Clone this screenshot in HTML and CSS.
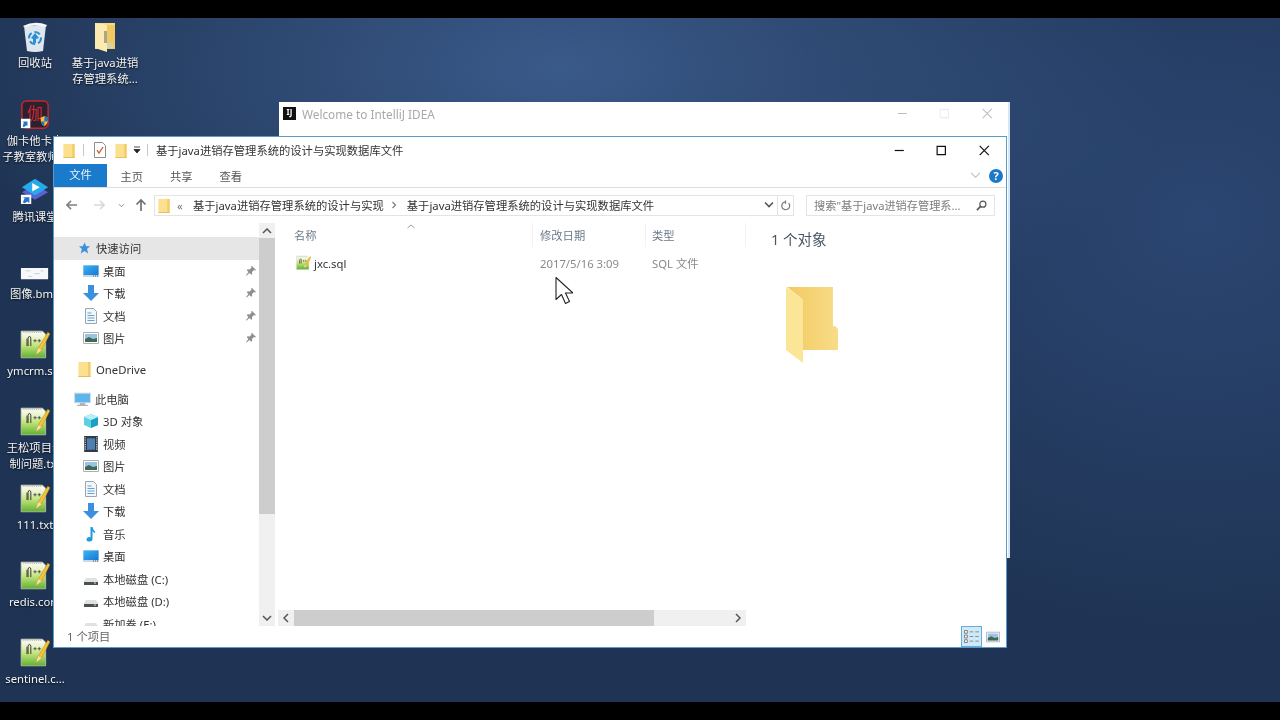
FILE: index.html
```html
<!DOCTYPE html>
<html lang="zh-CN">
<head>
<meta charset="utf-8">
<title>基于java进销存管理系统的设计与实现数据库文件</title>
<link rel="stylesheet" href="styles.css">
</head>
<body>
<svg class="defs" width="0" height="0" aria-hidden="true">
  <defs>
    <linearGradient id="gn" x1="0" x2="0" y1="0" y2="1"><stop offset="0" stop-color="#fbfbf4"/><stop offset=".22" stop-color="#eef4d4"/><stop offset=".55" stop-color="#bfe278"/><stop offset="1" stop-color="#5fb132"/></linearGradient>
    <linearGradient id="gd" x1="0" x2="1" y1="0" y2="1"><stop offset="0" stop-color="#3db3f5"/><stop offset="1" stop-color="#1478d4"/></linearGradient>
    <linearGradient id="gb" x1="0" x2="1" y1="0" y2="0"><stop offset="0" stop-color="#f1cb62"/><stop offset="1" stop-color="#f9dc88"/></linearGradient>
    <symbol id="i-folder" viewBox="0 0 12 16">
      <path d="M0 1h12v15H0z" fill="#fbe08f"/><path d="M9.500 1H12v15H9.500z" fill="#f3cc69"/><path d="M0 15h12v1H0z" fill="#e8bd55"/>
    </symbol>
    <symbol id="i-np" viewBox="0 0 28 30">
      <path d="M1 2h20l3 3v22H1z" fill="url(#gn)" stroke="#c6cdb4" stroke-width=".7"/>
      <path d="M3 3h17" stroke="#aaa" stroke-dasharray="1 1"/>
      <path d="M7.500 16V9q0-2 1.300-2t1.300 2v7M6.500 9v7" fill="none" stroke="#333" stroke-width=".9"/>
      <path d="M12.500 11h3M14 9.500v3M16.500 11h3M18 9.500v3" stroke="#444" stroke-width=".8"/>
      <path d="M15 24l2-6L26 3l2 1.500L20 20z" fill="#f3c33a" stroke="#b88a22" stroke-width=".5"/>
      <path d="M15 24l2-6 3 2z" fill="#f9e2b0"/>
    </symbol>
    <symbol id="i-desktop" viewBox="0 0 16 14">
      <path d="M0 1h16v12H0z" fill="#cfd8e0"/><path d="M.5 1.500h15v9.500H.5z" fill="url(#gd)"/><path d="M10 12h5" stroke="#456" stroke-dasharray="1 1"/>
    </symbol>
    <symbol id="i-down" viewBox="0 0 16 16">
      <path d="M5 0h6v8h5l-8 8-8-8h5z" fill="#3a90dc"/>
    </symbol>
    <symbol id="i-doc" viewBox="0 0 14 16">
      <path d="M1.500.5h8l3 3v12h-11z" fill="#f4f7fa" stroke="#9aa7b3"/>
      <path d="M3.500 5h4M3.500 7.500h7M3.500 10h7M3.500 12.500h7" stroke="#5ea4d6"/>
    </symbol>
    <symbol id="i-pic" viewBox="0 0 16 12">
      <path d="M.5.500h15v11H.5z" fill="#fff" stroke="#a9b0b6"/><path d="M2 2h12v8H2z" fill="#9cc3e4"/><path d="M2 7l4-2 4 2 4-1v4H2z" fill="#3f6a58"/>
    </symbol>
    <symbol id="i-pin" viewBox="0 0 10 10">
      <path d="M6 0l4 4-1 .6-1-.6-2 2 .2 2-1 .8-1.800-1.800L.8 9.600 0 9.200 2.400 6 .8 4.200l.8-1 2 .2 2-2-.6-1z" fill="#8f8f8f"/>
    </symbol>
    <symbol id="i-disk" viewBox="0 0 16 14">
      <path d="M1 9l2-3h10l2 3v4H1z" fill="#dfe2e4"/><path d="M1 10h14v3H1z" fill="#4d4f52"/><path d="M11 11h2" stroke="#cfe7a8"/>
    </symbol>
  </defs>
</svg>

<div class="screen">
  <div class="bar"></div>
  <main class="desktop">

    <div class="dicon at-recycle">
      <svg class="dsvg" viewBox="0 0 30 32"><path d="M4 5l22-1-3 26q-8 2-16 0z" fill="#dfe7ee"/><path d="M3 5q12-6 24-1l-1 2q-11-3-22 0z" fill="#f5f8fb"/><path d="M11 17l4-5 4 5-3 1v4h-3v-4z" fill="#2d8ed6"/><circle cx="15" cy="17" r="6" fill="none" stroke="#2d8ed6" stroke-width="2" stroke-dasharray="6 3"/></svg>
      <span class="dlabel">回收站</span>
    </div>
    <div class="dicon at-zip">
      <svg class="dsvg" viewBox="0 0 30 32"><path d="M5 2h20v26H5z" fill="#f8da84"/><path d="M5 2l12 2v27L5 27z" fill="#fcebb0"/><path d="M17 4h8v24h-8z" fill="#f1c964"/><path d="M14 10h3v12h-3z" fill="#a8a98a"/><path d="M17 22h6v5h-6z" fill="#d9d0ac"/></svg>
      <span class="dlabel">基于java进销<br>存管理系统...</span>
    </div>
    <div class="dicon at-jiaka">
      <svg class="dsvg" viewBox="0 0 32 32"><rect x="2" y="1" width="28" height="29" rx="5" fill="#2a2231" stroke="#c8262b" stroke-width="1.600"/><text x="16" y="20" class="jia">伽</text><path d="M22 19l4-2 4 2q0 7-4 9-4-2-4-9z" fill="#f4c430"/><path d="M26 17l4 2q0 3-.7 4H26zM22.700 23H26v5q-2.500-1-3.300-5z" fill="#2a6fc0"/><path d="M1 20h10v10H1z" fill="#fff"/><path d="M3 28l1-4-1-1h5v5l-1-1-3 2z" fill="#2474c8"/></svg>
      <span class="dlabel">伽卡他卡电<br>子教室教师...</span>
    </div>
    <div class="dicon at-ke">
      <svg class="dsvg" viewBox="0 0 32 32"><g transform="translate(0 2) scale(1 .9)"><path d="M16 8l14 9-14 9-14-9z" fill="#5a62d0"/><path d="M16 1l14 10-14 10L2 11z" fill="#27a9ee"/><path d="M13 6l8 5-8 5z" fill="#fff"/><path d="M1 20h11v11H1z" fill="#fff"/><path d="M3 29l2-5-2-1h7v7l-2-2-3 2z" fill="#2474c8"/></g></svg>
      <span class="dlabel">腾讯课堂</span>
    </div>
    <div class="dicon at-bmp">
      <svg class="dsvg" viewBox="0 0 32 32"><path d="M1 16h29v12H1z" fill="#f7f8fb"/><path d="M6 19h5M15 22h6M9 25h4M22 19h3" stroke="#c8cdda"/></svg>
      <span class="dlabel">图像.bmp</span>
    </div>
    <div class="dicon at-ym"><svg class="dsvg"><use href="#i-np"/></svg><span class="dlabel">ymcrm.sql</span></div>
    <div class="dicon at-ws"><svg class="dsvg"><use href="#i-np"/></svg><span class="dlabel">王松项目录<br>制问题.txt</span></div>
    <div class="dicon at-111"><svg class="dsvg"><use href="#i-np"/></svg><span class="dlabel">111.txt</span></div>
    <div class="dicon at-redis"><svg class="dsvg"><use href="#i-np"/></svg><span class="dlabel">redis.conf</span></div>
    <div class="dicon at-sent"><svg class="dsvg"><use href="#i-np"/></svg><span class="dlabel">sentinel.c...</span></div>

    <section class="idea">
      <div class="idea-title">
        <span class="ij"><span class="ij-t">IJ</span></span>
        <span class="idea-name">Welcome to IntelliJ IDEA</span>
        <div class="caps caps-faint">
          <svg class="cap" viewBox="0 0 12 12"><path d="M1 6h10"/></svg>
          <svg class="cap" viewBox="0 0 12 12"><path d="M1.500 1.500h9v9h-9z"/></svg>
          <svg class="cap" viewBox="0 0 12 12"><path d="M1 1l10 10M11 1L1 11"/></svg>
        </div>
      </div>
    </section>

    <section class="win">
      <header class="titlebar">
        <svg class="qa-f"><use href="#i-folder"/></svg>
        <i class="qa-sep"></i>
        <svg class="qa-n" viewBox="0 0 12 16"><path d="M.5.500h8l3 3v12H.5z" fill="#fff" stroke="#8d8d8d"/><path d="M3 8l2 3 4-6" fill="none" stroke="#d9552a" stroke-width="1.300"/></svg>
        <svg class="qa-f qa-f2"><use href="#i-folder"/></svg>
        <svg class="qa-d" viewBox="0 0 8 8"><path d="M1 1h6M1 3.500h6L4 7z" stroke="#222" fill="#222" stroke-width=".8"/></svg>
        <i class="qa-sep qa-sep2"></i>
        <h1 class="wintitle">基于java进销存管理系统的设计与实现数据库文件</h1>
        <div class="caps">
          <svg class="cap" viewBox="0 0 12 12"><path d="M1 6h10"/></svg>
          <svg class="cap" viewBox="0 0 12 12"><path d="M1.500 1.500h9v9h-9z"/></svg>
          <svg class="cap" viewBox="0 0 12 12"><path d="M1 1l10 10M11 1L1 11"/></svg>
        </div>
      </header>

      <nav class="tabs">
        <span class="tab tab-file">文件</span>
        <span class="tab">主页</span>
        <span class="tab">共享</span>
        <span class="tab">查看</span>
        <svg class="collapse" viewBox="0 0 12 8"><path d="M1 1l5 5 5-5" fill="none" stroke="#b8bcc2" stroke-width="1.200"/></svg>
        <span class="help">?</span>
      </nav>

      <div class="addr-row">
        <svg class="nv nv-back" viewBox="0 0 14 12"><path d="M13 6H2M6.500 1.500L2 6l4.500 4.500" fill="none" stroke="#7b8084" stroke-width="1.700"/></svg>
        <svg class="nv nv-fwd" viewBox="0 0 14 12"><path d="M1 6h11M7.500 1.500L12 6l-4.500 4.500" fill="none" stroke="#d6d9dc" stroke-width="1.700"/></svg>
        <svg class="nv nv-drop" viewBox="0 0 8 6"><path d="M1 1.500l3 3 3-3" fill="none" stroke="#8a8e92" stroke-width="1.200"/></svg>
        <svg class="nv nv-up" viewBox="0 0 12 14"><path d="M6 13V2M1.500 6.500L6 2l4.500 4.500" fill="none" stroke="#6d7278" stroke-width="1.700"/></svg>
        <div class="addr">
          <svg class="addr-f"><use href="#i-folder"/></svg>
          <span class="crumb-more">«</span>
          <span class="crumb">基于java进销存管理系统的设计与实现</span>
          <svg class="crumb-sep" viewBox="0 0 6 8"><path d="M1.500 1l3 3-3 3" fill="none" stroke="#777" stroke-width="1.100"/></svg>
          <span class="crumb">基于java进销存管理系统的设计与实现数据库文件</span>
          <svg class="addr-drop" viewBox="0 0 10 8"><path d="M1 1.500l4 4 4-4" fill="none" stroke="#555" stroke-width="1.600"/></svg>
          <span class="addr-refresh"><svg class="refresh" viewBox="0 0 12 12"><path d="M9.500 3.500a4.300 4.300 0 1 1-3-1.500M6 .5v3.500" fill="none" stroke="#777" stroke-width="1.300"/></svg></span>
        </div>
        <div class="search">
          <span class="search-t">搜索"基于java进销存管理系...</span>
          <svg class="search-i" viewBox="0 0 12 12"><circle cx="7.500" cy="4.500" r="3.300" fill="none" stroke="#555" stroke-width="1.300"/><path d="M5 7l-4 4" stroke="#555" stroke-width="1.800"/></svg>
        </div>
      </div>

      <div class="body">
        <aside class="side">
          <div class="tree">
            <div class="node node-1 node-sel"><svg class="ni" viewBox="0 0 14 14"><path d="M7 1l1.800 4H13l-3.300 3 1.200 5L7 10.300 3 13l1.200-5L1 5h4.200z" fill="#3c8fd8"/></svg>快速访问</div>
            <div class="node node-2"><svg class="ni"><use href="#i-desktop"/></svg>桌面<svg class="pin"><use href="#i-pin"/></svg></div>
            <div class="node node-2"><svg class="ni"><use href="#i-down"/></svg>下载<svg class="pin"><use href="#i-pin"/></svg></div>
            <div class="node node-2"><svg class="ni"><use href="#i-doc"/></svg>文档<svg class="pin"><use href="#i-pin"/></svg></div>
            <div class="node node-2"><svg class="ni"><use href="#i-pic"/></svg>图片<svg class="pin"><use href="#i-pin"/></svg></div>
            <div class="node node-1 gap-a"><svg class="ni"><use href="#i-folder"/></svg>OneDrive</div>
            <div class="node node-1 gap-b"><svg class="ni ni-pc" viewBox="0 0 16 14"><path d="M0 1h16v10H0z" fill="#d5dce2"/><path d="M1 2h14v8H1z" fill="#5cb6ee"/><path d="M3 13h10M6 11h4v2H6z" stroke="#a9b3ba" fill="#a9b3ba"/></svg>此电脑</div>
            <div class="node node-2"><svg class="ni" viewBox="0 0 16 16"><path d="M8 1l7 3v8l-7 3-7-3V4z" fill="#5fd0e0"/><path d="M8 7l7-3v8l-7 3z" fill="#1b9fc4"/><path d="M8 7L1 4l7-3 7 3z" fill="#b6eff5"/></svg>3D 对象</div>
            <div class="node node-2"><svg class="ni" viewBox="0 0 14 14"><path d="M1 0h12v14H1z" fill="#2f3a4a"/><path d="M3.500 2h7v10h-7z" fill="#4d7fb0"/><path d="M2 1v12M12 1v12" stroke="#ddd" stroke-dasharray="1 1"/></svg>视频</div>
            <div class="node node-2"><svg class="ni"><use href="#i-pic"/></svg>图片</div>
            <div class="node node-2"><svg class="ni"><use href="#i-doc"/></svg>文档</div>
            <div class="node node-2"><svg class="ni"><use href="#i-down"/></svg>下载</div>
            <div class="node node-2"><svg class="ni" viewBox="0 0 14 16"><path d="M6.500 1h2q.5 3 3 5l-1 1Q9 6 8.500 5v8q0 2.500-3 2.500t-3-2 3-2.500q1 0 1 .3z" fill="#1e9ae0"/></svg>音乐</div>
            <div class="node node-2"><svg class="ni"><use href="#i-desktop"/></svg>桌面</div>
            <div class="node node-2"><svg class="ni"><use href="#i-disk"/></svg>本地磁盘 (C:)</div>
            <div class="node node-2"><svg class="ni"><use href="#i-disk"/></svg>本地磁盘 (D:)</div>
            <div class="node node-2"><svg class="ni"><use href="#i-disk"/></svg>新加卷 (E:)</div>
          </div>
          <div class="vscroll">
            <svg class="sa" viewBox="0 0 10 6"><path d="M1 5l4-4 4 4" fill="none" stroke="#555" stroke-width="1.500"/></svg>
            <div class="vtrack"><div class="vthumb"></div></div>
            <svg class="sa" viewBox="0 0 10 6"><path d="M1 1l4 4 4-4" fill="none" stroke="#555" stroke-width="1.500"/></svg>
          </div>
        </aside>

        <div class="files">
          <svg class="sort" viewBox="0 0 8 5"><path d="M.5 4L4 1l3.500 3" fill="none" stroke="#9aa0a6"/></svg>
          <div class="fhead">
            <span class="col col-name">名称</span>
            <span class="col col-date">修改日期</span>
            <span class="col col-type">类型</span>
          </div>
          <div class="frow">
            <span class="col col-name fname"><svg class="fi" viewBox="0 0 28 30"><use href="#i-np"/></svg>jxc.sql</span>
            <span class="col col-date">2017/5/16 3:09</span>
            <span class="col col-type">SQL 文件</span>
          </div>
          <div class="hscroll">
            <svg class="ha" viewBox="0 0 6 10"><path d="M5 1L1 5l4 4" fill="none" stroke="#555" stroke-width="1.500"/></svg>
            <div class="htrack"><div class="hthumb"></div></div>
            <svg class="ha" viewBox="0 0 6 10"><path d="M1 1l4 4-4 4" fill="none" stroke="#555" stroke-width="1.500"/></svg>
          </div>
        </div>

        <aside class="details">
          <div class="count">1 个对象</div>
          <svg class="bigf" viewBox="0 0 52 76"><path d="M1 0h46v39h2l3 3v21H17V13z" fill="url(#gb)"/><path d="M0 0l17 13v63L0 63z" fill="#fbe596"/></svg>
        </aside>
      </div>

      <footer class="status">
        <span class="status-t">1 个项目</span>
        <span class="view view-on"><svg class="vi" viewBox="0 0 16 14"><path d="M.5.500h3v3h-3zM.5 5.500h3v3h-3zM.5 10.500h3v3h-3z" fill="#fff" stroke="#777"/><path d="M6 2h4M12 2h4M6 7h4M12 7h4M6 12h4M12 12h4" stroke="#888"/></svg></span>
        <span class="view"><svg class="vi vi2"><use href="#i-pic"/></svg></span>
      </footer>
    </section>

    <svg class="cursor" viewBox="0 0 18 28"><path d="M1 1v22l5.500-5 4 9 4-2-4-8.500H18z" fill="#fff" stroke="#222" stroke-width="1.100" stroke-linejoin="round"/></svg>
  </main>
  <div class="bar"></div>
</div>
</body>
</html>
```

FILE: styles.css
```css
* { box-sizing: border-box; }
html, body { margin: 0; height: 100%; overflow: hidden; background: #000; }
body { font-family: "Noto Sans", "Noto Sans CJK SC", sans-serif; font-size: 11.300px; color: #2b2b2b; }
.defs { position: absolute; }
.screen { width: 1280px; height: 720px; display: flex; flex-direction: column; filter: blur(.35px); }
.bar { height: 18px; background: #000; flex: none; }
.desktop {
  position: relative; flex: 1; overflow: hidden;
  background:
    radial-gradient(ellipse 620px 300px at 560px 50px, #3a5a8a 0%, rgba(58,90,138,.55) 45%, rgba(58,90,138,0) 100%),
    radial-gradient(ellipse 500px 420px at 1200px 200px, #2b4672 0%, rgba(43,70,114,0) 100%),
    #1f3454;
}

/* desktop icons: free canvas */
.dicon { position: absolute; left: -1px; width: 72px; display: flex; flex-direction: column; align-items: center; }
.dsvg { width: 30px; height: 32px; display: block; }
.dlabel { margin-top: 2px; color: #f4f6f8; font-size: 11.300px; line-height: 16px; text-align: center; white-space: nowrap; text-shadow: 0 1px 2px rgba(0,0,0,.85); }
.at-recycle { top: 3px; }
.at-zip { top: 3px; left: 69px; }
.at-jiaka { top: 81px; }
.at-ke { top: 157px; }
.at-bmp { top: 234px; }
.at-ym { top: 311px; }
.at-ws { top: 388px; }
.at-111 { top: 465px; }
.at-redis { top: 542px; }
.at-sent { top: 619px; }
.jia { font-family: "Noto Sans CJK SC", sans-serif; font-size: 17px; text-anchor: middle; fill: #d8262c; }

/* background window */
.idea { position: absolute; left: 279px; top: 84px; width: 731px; height: 456px; background: #fff; border-right: 2px solid #d8e6ef; }
.idea-title { height: 24px; display: flex; align-items: center; padding: 0 0 1px 4px; }
.ij { width: 13px; height: 13px; background: #111; display: flex; justify-content: center; flex: none; }
.ij-t { color: #fff; font-size: 8px; font-weight: 700; line-height: 10px; }
.idea-name { margin-left: 6px; color: #a9a9a9; font-size: 11.800px; }
.caps { margin-left: auto; display: flex; }
.cap { width: 42.500px; height: 11px; fill: none; stroke: #111; stroke-width: 1.300; }
.caps-faint .cap { stroke: #bdbdbd; stroke-width: 1.100; }
.caps-faint .cap:nth-child(2) { stroke: #ececec; }

/* explorer */
.win { position: absolute; left: 53px; top: 118px; width: 954px; height: 512px; background: #fff; border: 1px solid #5a9cc8; display: flex; flex-direction: column; }
.titlebar { height: 27px; flex: none; display: flex; align-items: center; padding: 0 0 1px 9px; }
.qa-f { width: 12px; height: 15px; flex: none; }
.qa-f2 { margin-left: 9px; }
.qa-sep { width: 1px; height: 12px; background: #c8c8c8; margin: 0 10px 0 8px; flex: none; }
.qa-sep2 { margin: 0 8px 0 6px; }
.qa-n { width: 12px; height: 16px; flex: none; }
.qa-d { width: 8px; height: 8px; margin-left: 6px; flex: none; }
.wintitle { margin: 0; font-size: 11.300px; font-weight: 400; color: #333; white-space: nowrap; }
.titlebar .caps { padding-right: 1px; }
.tabs { height: 24px; flex: none; display: flex; align-items: center; border-bottom: 1px solid #dcdee0; }
.tab { width: 49.500px; text-align: center; color: #555; padding-top: 1px; }
.tab-file { width: 53px; height: 23px; line-height: 22px; padding-top: 0; background: #1a7acb; color: #eaf3fb; }
.collapse { width: 11px; height: 7px; margin-left: auto; }
.help { width: 14px; height: 14px; margin: 0 3px 0 8px; border-radius: 50%; background: #1c78c8; color: #fff; font-size: 11px; font-weight: 700; line-height: 14px; text-align: center; }
.addr-row { height: 35px; flex: none; display: flex; align-items: center; padding: 0 11px 1px 11px; }
.nv { flex: none; }
.nv-back { width: 13px; height: 12px; }
.nv-fwd { width: 13px; height: 12px; margin-left: 15px; }
.nv-drop { width: 7px; height: 5px; margin-left: 12px; }
.nv-up { width: 12px; height: 14px; margin-left: 10px; }
.addr { width: 640px; height: 21px; margin-left: 7px; flex: none; border: 1px solid #e2e4e6; display: flex; align-items: center; padding-left: 3px; }
.addr-f { width: 12px; height: 15px; flex: none; }
.crumb-more { margin: 0 8px 0 5px; color: #777; width: 10px; text-align: center; }
.crumb { color: #333; white-space: nowrap; }
.crumb-sep { width: 6px; height: 8px; margin: 0 10px 0 7px; flex: none; }
.addr-drop { width: 10px; height: 8px; margin: 0 3px 0 auto; flex: none; }
.addr-refresh { width: 16px; height: 100%; border-left: 1px solid #e2e4e6; display: flex; align-items: center; justify-content: center; flex: none; }
.refresh { width: 11px; height: 11px; }
.search { width: 189px; height: 21px; margin-left: 12px; flex: none; border: 1px solid #e2e4e6; display: flex; align-items: center; padding: 0 7px; justify-content: space-between; }
.search-t { color: #7c7c7c; white-space: nowrap; font-size: 11.200px; }
.search-i { width: 11px; height: 11px; flex: none; }

.body { flex: 1; min-height: 0; display: flex; }
.side { width: 221px; flex: none; display: flex; }
.tree { flex: 1; min-width: 0; padding-top: 14px; overflow: hidden; }
.node { height: 22.500px; display: flex; align-items: center; color: #333; white-space: nowrap; }
.node-1 { padding-left: 24px; }
.node-2 { padding-left: 29px; }
.node-sel { background: #e6e6e6; }
.gap-a { margin-top: 8.500px; }
.gap-b { margin-top: 7px; }
.ni { width: 16px; height: 16px; flex: none; margin-right: 4px; }
.node-1 .ni { width: 13px; margin-right: 5px; }
.node-1 .ni-pc { width: 17px; margin: 0 4px 0 -4px; }
.pin { width: 10px; height: 10px; margin-left: auto; margin-right: 3px; flex: none; }
.vscroll { width: 16px; flex: none; background: #f0f0f0; display: flex; flex-direction: column; align-items: center; padding: 1px 0; }
.sa { width: 10px; height: 6px; margin: 4px 0; flex: none; }
.vtrack { flex: 1; width: 100%; }
.vthumb { height: 276px; background: #cdcdcd; }

.files { width: 473px; flex: none; position: relative; display: flex; flex-direction: column; padding-left: 3px; }
.sort { position: absolute; left: 132px; top: 1px; width: 8px; height: 5px; }
.fhead { height: 24px; display: flex; align-items: flex-end; flex: none; color: #6c7a8a; }
.fhead .col { height: 24px; line-height: 26px; border-right: 1px solid #f2f2f2; }
.frow { height: 32px; display: flex; align-items: center; flex: none; color: #8a8a8a; }
.col { display: block; white-space: nowrap; padding-left: 6px; }
.col-name { width: 255px; padding-left: 16px; }
.col-date { width: 113px; padding-left: 7px; }
.col-type { width: 100px; }
.fname { display: flex; align-items: center; color: #333; padding-left: 18px; }
.fi { width: 15px; height: 16px; margin-right: 3px; flex: none; }
.hscroll { height: 16px; margin: auto 2px 0 0; display: flex; align-items: center; background: #f0f0f0; }
.ha { width: 6px; height: 10px; margin: 0 5px; flex: none; }
.htrack { flex: 1; height: 100%; padding-right: 76px; }
.hthumb { height: 100%; background: #cdcdcd; }

.details { flex: 1; min-width: 0; padding: 6px 0 0 23px; }
.count { font-size: 14.500px; line-height: 20px; color: #4a5565; }
.bigf { width: 52px; height: 76px; display: block; margin: 38px 0 0 15px; }

.status { height: 21px; flex: none; display: flex; align-items: center; padding: 0 3px 0 13px; }
.status-t { margin: 0 auto 2px 0; color: #666; }
.view { width: 21px; height: 21px; display: flex; align-items: center; justify-content: center; }
.view-on { background: #cfe9f8; border: 1px solid #62add9; }
.vi { width: 15px; height: 13px; }
.vi2 { width: 14px; height: 12px; }
.cursor { position: absolute; left: 555px; top: 258px; width: 18px; height: 29px; }
```
